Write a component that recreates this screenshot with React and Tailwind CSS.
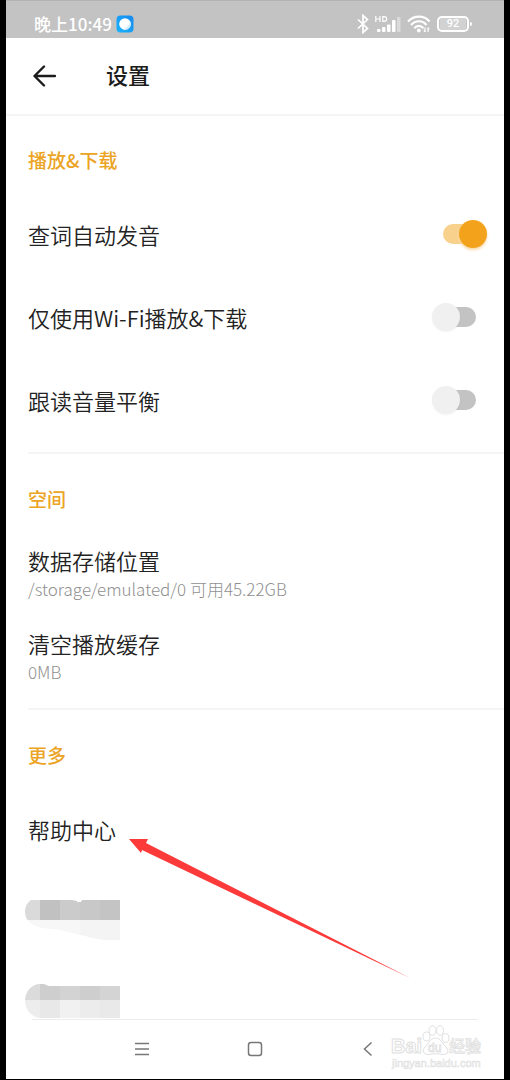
import React from 'react';

const PLAYBACK = [
    { id: 'autoSpeak', name: '查词自动发音' },
    { id: 'wifiOnly', name: '仅使用Wi-Fi播放&下载' },
    { id: 'balance', name: '跟读音量平衡' },
];

const STORAGE = [
    { id: 'location', name: '数据存储位置', detail: '/storage/emulated/0 可用45.22GB' },
    { id: 'cache', name: '清空播放缓存', detail: '0MB' },
];

function StatusBar() {
    return (
        <div className="flex h-[38px] items-center border-t border-[#b2b2b2] bg-[#c3c3c3] pt-2 pr-8 pl-7 text-white">
            <span className="text-[17px] leading-6 font-medium">晚上10:49</span>
            <svg className="ml-1 size-[18px]" viewBox="0 0 18 18">
                <defs>
                    <linearGradient id="app" x1="1" y1="0" x2="0" y2="1">
                        <stop offset="0" stopColor="#1688ee" />
                        <stop offset="1" stopColor="#18b4fd" />
                    </linearGradient>
                </defs>
                <rect x="0.5" y="0.5" width="17" height="17" rx="4" fill="url(#app)" />
                <circle cx="9" cy="9" r="5.8" fill="#fff" />
                <path d="M14.2 6.4A5.8 5.8 0 0 1 6.6 14.3C10.5 13 13 10.5 14.2 6.4Z" fill="#d3ecfb" />
            </svg>
            <div className="ml-auto flex items-center">
                <svg className="h-5 w-3" viewBox="0 0 12 20" fill="none" stroke="#fff" strokeWidth="1.7">
                    <path d="M1 5.5 10.5 14.5 6 18.5V1.5L10.5 5.5 1 14.5" />
                </svg>
                <svg className="ml-1.5 h-5 w-[26px]" viewBox="0 0 26 20" fill="#fff">
                    <path d="M.8 2v6M5 2v6M.8 5h4.2M7.8 2.6v4.8h1.2c3.6 0 3.6-4.8 0-4.8z" fill="none" stroke="#fff" strokeWidth="1.2" />
                    <rect x="2" y="15" width="3.5" height="3" rx="1" />
                    <rect x="7" y="13" width="3.5" height="5" rx="1" />
                    <rect x="12" y="10.5" width="3.5" height="7.5" rx="1" />
                    <rect x="17" y="6" width="3.5" height="12" rx="1" />
                    <rect x="22" y="3" width="3.5" height="15" rx="1" opacity="0.4" />
                </svg>
                <svg className="ml-1.5 h-5 w-6" viewBox="0 0 24 20" fill="none" stroke="#fff" strokeWidth="2.2">
                    <path d="M1 7.5C7 1 17 1 22.5 7.5M4 11c4.5-5 11.5-5 15.5 0M7.3 14.2c2.7-3 6.5-3 9.2 0" />
                    <circle cx="11.8" cy="16.5" r="1.9" fill="#fff" stroke="none" />
                    <path d="M18 13.5v4.5M16.8 16.5l1.2 1.5M21 18v-4.5M22.2 15 21 13.5" strokeWidth="1.2" />
                </svg>
                <div className="ml-1.5 flex h-4 w-8 items-center justify-center rounded-[5px] border-2 border-white p-px">
                    <span className="w-full rounded-xs bg-white/25 text-center font-['Roboto'] text-[11px] leading-3 font-medium">92</span>
                </div>
                <span className="ml-px h-1 w-0.5 rounded-r-xs bg-white" />
            </div>
        </div>
    );
}

function Section({ title, children }) {
    return (
        <section>
            <h2 className="pt-6 pb-[14px] text-[19px] leading-10 font-medium text-[#eca424]">{title}</h2>
            {children}
        </section>
    );
}

function Divider() {
    return <hr className="mt-[9px] mb-px border-t-2 border-[#f5f5f5]" />;
}

function Switch({ id, checked, onChange }) {
    return (
        <input
            id={id}
            type="checkbox"
            role="switch"
            checked={checked}
            onChange={onChange}
            className="relative h-7 w-[55px] appearance-none before:absolute before:top-1 before:left-[11px] before:h-5 before:w-[33px] before:rounded-full before:bg-[#c3c3c3] after:absolute after:top-0 after:left-0 after:size-7 after:rounded-full after:bg-[#f0f0f0] after:shadow-xs checked:before:bg-[#f8d18c] checked:after:left-[27px] checked:after:bg-[#f2a31b] checked:after:shadow-[0_2px_3px_#f8d9a6]"
        />
    );
}

// 打码的菜单项
function MaskedTop() {
    return (
        <svg className="-ml-1 h-[83px] w-24" viewBox="0 0 96 83">
            <clipPath id="maskTop">
                <path d="M7 28H48L53 29V30H57L58 28H96V68H80C60 65 45 58 18 56C10 54 1 50 1 40C1 34 4 30 7 28Z" />
            </clipPath>
            <g clipPath="url(#maskTop)" shapeRendering="crispEdges">
                <rect x="0" y="28" width="16" height="20" fill="#dadada" />
                <rect x="16" y="28" width="20" height="20" fill="#c1c1c1" />
                <rect x="36" y="28" width="20" height="20" fill="#cbcbcb" />
                <rect x="56" y="28" width="20" height="20" fill="#c8c8c8" />
                <rect x="76" y="28" width="20" height="20" fill="#c4c4c4" />
                <rect x="0" y="48" width="56" height="20" fill="#f7f7f7" />
                <rect x="56" y="48" width="40" height="20" fill="#f4f4f4" />
            </g>
        </svg>
    );
}

function MaskedBottom() {
    return (
        <svg className="-ml-1 h-16 w-24" viewBox="0 0 96 64">
            <clipPath id="maskBottom">
                <path d="M16 29H20L25 31H96V63H16C7 62 1 54 1 46C1 37 7 29 16 29Z" />
            </clipPath>
            <g clipPath="url(#maskBottom)" shapeRendering="crispEdges">
                <rect x="0" y="28" width="16" height="17" fill="#dbdbdb" />
                <rect x="16" y="28" width="20" height="17" fill="#cecece" />
                <rect x="36" y="28" width="20" height="17" fill="#d3d3d3" />
                <rect x="56" y="28" width="20" height="17" fill="#cecece" />
                <rect x="76" y="28" width="20" height="17" fill="#d4d4d4" />
                <rect x="0" y="45" width="16" height="19" fill="#ededed" />
                <rect x="16" y="45" width="20" height="19" fill="#e8e8e8" />
                <rect x="36" y="45" width="20" height="19" fill="#f1f1f1" />
                <rect x="56" y="45" width="20" height="19" fill="#ececec" />
                <rect x="76" y="45" width="20" height="19" fill="#e9e9e9" />
            </g>
        </svg>
    );
}

function Watermark() {
    return (
        <svg className="pointer-events-none absolute right-5 bottom-2 h-[50px] w-[96px]" viewBox="0 0 96 50" fill="#fff" stroke="#e0e0e0">
            <ellipse cx="38.5" cy="15.5" rx="3.5" ry="4.5" />
            <ellipse cx="44.5" cy="9.5" rx="3.5" ry="4.8" />
            <ellipse cx="52" cy="9.5" rx="3.5" ry="4.8" />
            <ellipse cx="57.5" cy="17" rx="3.5" ry="4.5" />
            <path d="M47.5 17C42 17 41 23 37 26C34 29 35 34 41 33.5C46 32.5 50 32.5 54 33.5C61 34 61 29 58 26C54 23 53 17 47.5 17Z" />
            <text x="3" y="32" className="font-['Liberation_Sans'] text-[20px] font-bold">Bai</text>
            <text x="40" y="31" strokeWidth="0.8" className="font-['Liberation_Sans'] text-[12px]">du</text>
            <text x="61" y="31" strokeWidth="0.8" className="font-['Liberation_Sans','Noto_Sans_CJK_SC',sans-serif] text-[16px] font-medium">经验</text>
            <text x="4" y="46" strokeWidth="0.6" className="font-['Liberation_Sans'] text-[11px]">jingyan.baidu.com</text>
        </svg>
    );
}

export default function App() {
    const [enabled, setEnabled] = React.useState({ autoSpeak: true, wifiOnly: false, balance: false });

    const toggle = (id) => setEnabled(prev => ({ ...prev, [id]: !prev[id] }));

    return (
        <div className="min-h-screen bg-black px-1.5 pb-px font-['Noto_Sans_CJK_SC',sans-serif]">
            <div className="relative bg-white">
                <StatusBar />
                <header className="flex h-[78px] items-center border-b-2 border-[#f5f5f5] pl-[26px]">
                    <button type="button" aria-label="返回">
                        <svg className="size-6" viewBox="0 0 24 24" fill="none" stroke="#1c1c1c" strokeWidth="2.4" strokeLinecap="round" strokeLinejoin="round">
                            <path d="M23 12H3M12 2.5 2.5 12 12 21.5" />
                        </svg>
                    </button>
                    <h1 className="ml-[50px] pb-1 text-[22px] leading-8 font-medium text-[#1c1c1c]">设置</h1>
                </header>

                <main className="pl-[22px] text-[22px] leading-8 font-[350] text-[#222]">
                    <Section title="播放&下载">
                        {PLAYBACK.map(item => (
                            <div key={item.id} className="flex h-[83px] items-center justify-between pr-[17px] pb-1">
                                <label htmlFor={item.id}>{item.name}</label>
                                <Switch id={item.id} checked={enabled[item.id]} onChange={() => toggle(item.id)} />
                            </div>
                        ))}
                    </Section>
                    <Divider />
                    <Section title="空间">
                        {STORAGE.map(item => (
                            <button key={item.id} type="button" className="flex h-[83px] w-full flex-col justify-center pb-1 text-left">
                                <span>{item.name}</span>
                                <span className="text-[17px] leading-[26px] font-light text-[#909090]">{item.detail}</span>
                            </button>
                        ))}
                    </Section>
                    <Divider />
                    <Section title="更多">
                        <div className="relative">
                            <button type="button" className="flex h-[83px] w-full items-center pb-1">帮助中心</button>
                            <svg className="pointer-events-none absolute top-[50px] left-[101px] h-[140px] w-[282px]" viewBox="0 0 282 140">
                                <path d="M0 0H19L17 4 281 139 13 11 12 14Z" fill="#fc3a3a" />
                            </svg>
                        </div>
                        <MaskedTop />
                        <MaskedBottom />
                    </Section>
                </main>

                <nav className="mx-[26px] grid h-[60px] grid-cols-3 border-t border-[#ededed] px-[54px] pb-0.5 text-[#777]">
                    <button type="button" aria-label="菜单" className="flex items-center justify-center">
                        <svg className="size-4" viewBox="0 0 16 16" stroke="currentColor" strokeWidth="1.5">
                            <path d="M1 2.5h14M1 8h14M1 13.5h14" />
                        </svg>
                    </button>
                    <button type="button" aria-label="主页" className="flex items-center justify-center">
                        <svg className="size-4" viewBox="0 0 16 16" fill="none" stroke="currentColor" strokeWidth="1.5">
                            <rect x="1.5" y="1.5" width="13" height="13" rx="2.5" />
                        </svg>
                    </button>
                    <button type="button" aria-label="后退" className="flex items-center justify-center">
                        <svg className="size-4" viewBox="0 0 16 16" fill="none" stroke="currentColor" strokeWidth="1.5">
                            <path d="M11.5 1.5 4.5 8l7 6.5" />
                        </svg>
                    </button>
                </nav>
                <Watermark />
            </div>
        </div>
    );
}
